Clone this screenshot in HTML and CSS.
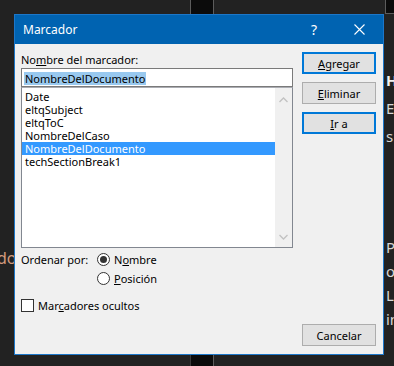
FILE: index.html
```html
<!DOCTYPE html>
<html>
<head>
    <title>Marcador</title>
    <link rel="stylesheet" href="styles.css">
</head>
<body>
    <div class="desktop">
        <div class="tab-gap tab-gap-top"></div>
        <div class="tab-gap tab-gap-bottom"></div>
        <div class="corner-tab"></div>
        <span class="code-text">do</span>
        <div class="doc-text">
            <p class="doc-heading">H</p>
            <p class="doc-line">E</p>
            <p class="doc-line">si</p>
            <p class="doc-line doc-gap">P</p>
            <p class="doc-line doc-tight">o</p>
            <p class="doc-line doc-tight">L</p>
            <p class="doc-line doc-tight">in</p>
        </div>

        <div class="dialog">
            <div class="titlebar">
                <span class="title">Marcador</span>
                <span class="help">?</span>
                <span class="close">
                    <svg width="11" height="11" viewBox="0 0 11 11"><path d="M0.5 0.5 L10.5 10.5 M10.5 0.5 L0.5 10.5" stroke="#fff" stroke-width="1.1" fill="none"/></svg>
                </span>
            </div>

            <div class="dialog-body">
                <div class="main-col">
                    <div class="field-label">No<u>m</u>bre del marcador:</div>
                    <div class="name-input"><span class="selected-text">NombreDelDocumento</span></div>
                    <div class="listbox">
                        <ul class="items">
                            <li>Date</li>
                            <li>eltqSubject</li>
                            <li>eltqToC</li>
                            <li>NombreDelCaso</li>
                            <li class="active">NombreDelDocumento</li>
                            <li>techSectionBreak1</li>
                        </ul>
                        <div class="scrollbar">
                            <svg width="9" height="6" viewBox="0 0 9 6"><path d="M0.5 5 L4.5 1 L8.5 5" stroke="#c2c2c2" stroke-width="1.3" fill="none"/></svg>
                            <svg width="9" height="6" viewBox="0 0 9 6"><path d="M0.5 1 L4.5 5 L8.5 1" stroke="#c2c2c2" stroke-width="1.3" fill="none"/></svg>
                        </div>
                    </div>

                    <div class="sort-row">
                        <span class="sort-label">Ordenar por:</span>
                        <div class="radios">
                            <div class="option"><span class="radio checked"></span><span>N<u>o</u>mbre</span></div>
                            <div class="option"><span class="radio"></span><span><u>P</u>osición</span></div>
                        </div>
                    </div>

                    <div class="option hidden-opt"><span class="checkbox"></span><span>Mar<u>c</u>adores ocultos</span></div>
                </div>

                <div class="btn-col">
                    <button class="btn default"><u>A</u>gregar</button>
                    <button class="btn"><u>E</u>liminar</button>
                    <button class="btn default"><u>I</u>r a</button>
                    <button class="btn cancel">Cancelar</button>
                </div>
            </div>
        </div>
    </div>
</body>
</html>
```

FILE: styles.css
```css
body { margin: 0; background: #212121; font-family: "Noto Sans", "Segoe UI", sans-serif; }
.desktop { position: relative; width: 394px; height: 366px; overflow: hidden; background: #222222; }

/* bits of the editor behind the dialog */
.tab-gap { position: absolute; left: 190px; width: 22px; background: #0b0b0b; border-left: 1px solid #5c5c5c; border-right: 1px solid #5c5c5c; }
.tab-gap-top { top: 0; height: 14px; }
.tab-gap-bottom { top: 355px; height: 11px; border-left-color: #3a3a3a; }
.corner-tab { position: absolute; left: 385px; top: 0; width: 9px; height: 13px; background: #0b0b0b; border-left: 1px solid #5c5c5c; border-bottom: 1px solid #5c5c5c; }
.code-text { position: absolute; left: -3px; top: 247px; font-size: 16px; line-height: 22px; color: #d39a7c; }
.doc-text { position: absolute; left: 386px; top: 70px; color: #d6d6d6; font-size: 15px; }
.doc-text p { margin: 0; line-height: 20px; }
.doc-heading { font-weight: bold; color: #f2f2f2; }
.doc-line { margin-top: 8px !important; }
.doc-gap { margin-top: 91px !important; }
.doc-tight { margin-top: 4px !important; }

/* dialog */
.dialog { position: absolute; left: 14px; top: 14px; width: 370px; height: 341px; box-sizing: border-box; border: 1px solid #1c77c9; background: #f0f0f0; display: flex; flex-direction: column; font-size: 11px; color: #000; }
.titlebar { height: 29px; background: #0063b1; color: #fff; display: flex; align-items: center; padding-left: 8px; font-size: 12px; }
.title { flex: 1; }
.help { width: 14px; text-align: center; margin-right: 33px; font-size: 14px; }
.close { width: 11px; height: 11px; margin-right: 18px; display: flex; }

.dialog-body { flex: 1; display: flex; gap: 9px; padding: 8px 7px 8px 6px; }
.main-col { width: 272px; display: flex; flex-direction: column; }
.field-label { height: 16px; line-height: 16px; }
.name-input { height: 19px; box-sizing: border-box; border: 1px solid #7a7a7a; background: #fff; padding: 2px 0 0 2px; }
.selected-text { display: inline-block; background: #99c9ef; line-height: 13px; height: 13px; padding: 0 1px; }

.listbox { height: 161px; box-sizing: border-box; border: 1px solid #828790; border-top-color: #abadb3; background: #fff; display: flex; }
.items { list-style: none; margin: 0; padding: 2px 0 0 0; flex: 1; }
.items li { height: 13px; line-height: 13px; padding-left: 3px; }
.items li.active { background: #3399ff; color: #fff; }
.scrollbar { width: 17px; background: #f0f0f0; display: flex; flex-direction: column; justify-content: space-between; align-items: center; padding: 9px 0 7px; }

.sort-row { display: flex; margin-top: 5px; }
.sort-label { width: 76px; line-height: 13px; }
.radios { display: flex; flex-direction: column; gap: 6px; }
.option { display: flex; align-items: center; gap: 4px; line-height: 13px; }
.radio { width: 13px; height: 13px; box-sizing: border-box; border: 1px solid #333; border-radius: 50%; background: #fff; display: flex; align-items: center; justify-content: center; }
.radio.checked::after { content: ""; width: 7px; height: 7px; border-radius: 50%; background: #333; }
.checkbox { width: 13px; height: 13px; box-sizing: border-box; border: 1px solid #333; background: #fff; }
.hidden-opt { margin-top: 14px; }

.btn-col { width: 74px; display: flex; flex-direction: column; gap: 8px; }
.btn { height: 22px; box-sizing: border-box; border: 1px solid #adadad; background: #e1e1e1; font: inherit; color: #000; padding: 0; }
.btn.default { border: 2px solid #0078d7; }
.btn.cancel { margin-top: auto; }
```
